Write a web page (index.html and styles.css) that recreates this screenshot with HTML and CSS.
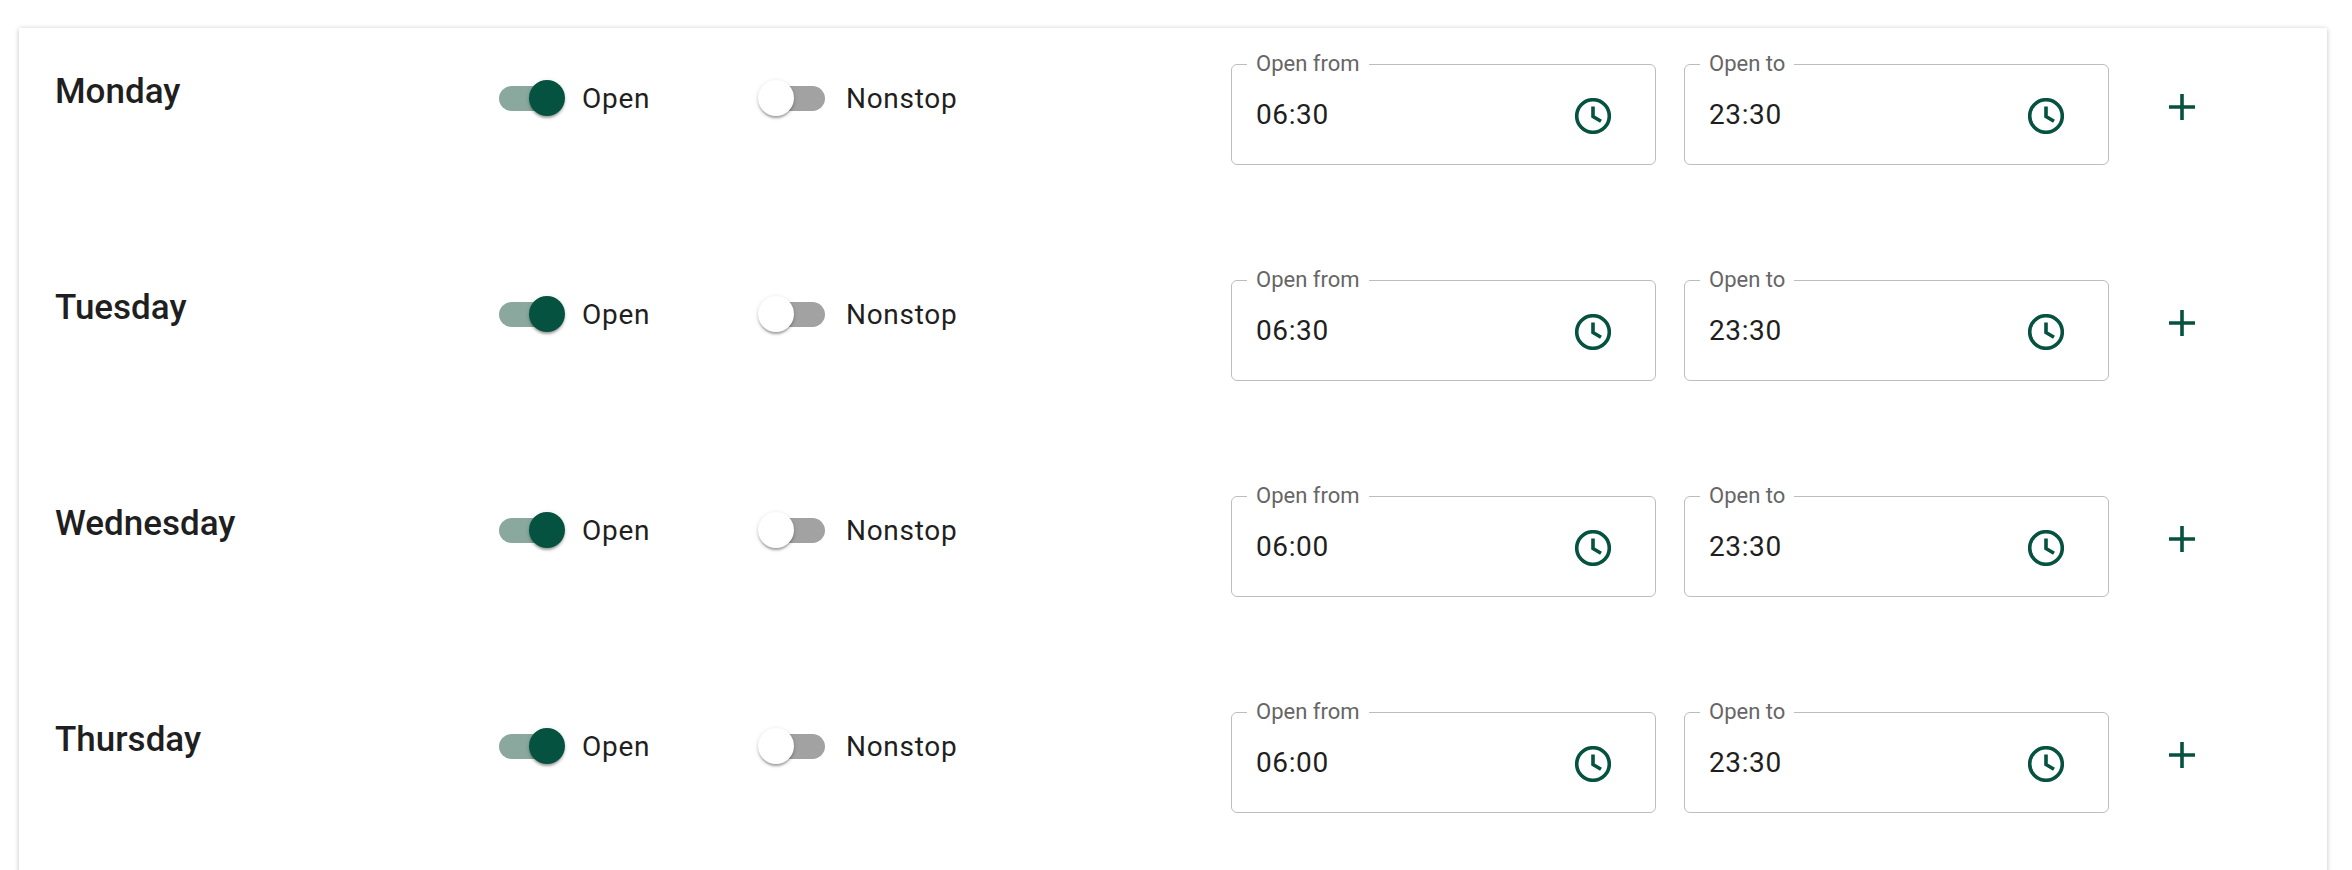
FILE: index.html
```html
<!DOCTYPE html>
<html lang="en">
<head>
<meta charset="utf-8">
<title>Opening hours</title>
<link rel="stylesheet" href="styles.css">
</head>
<body>
<main class="card">
  <section class="row">
    <h2 class="day">Monday</h2>
    <div class="switch-wrap open-col"><span class="switch on"><span class="track"></span><span class="thumb"></span></span><span class="switch-label">Open</span></div>
    <div class="switch-wrap nonstop-col"><span class="switch"><span class="track"></span><span class="thumb"></span></span><span class="switch-label">Nonstop</span></div>
    <div class="fields">
      <div class="field"><span class="legend">Open from</span><span class="value">06:30</span><svg class="clock" viewBox="0 0 36 36"><circle cx="18" cy="18" r="16.3"/><path d="M18 8.5V18.5L26 23.2"/></svg></div>
      <div class="field"><span class="legend">Open to</span><span class="value">23:30</span><svg class="clock" viewBox="0 0 36 36"><circle cx="18" cy="18" r="16.3"/><path d="M18 8.5V18.5L26 23.2"/></svg></div>
    </div>
    <svg class="plus" viewBox="0 0 26 26"><path d="M13 0V26M0 13H26"/></svg>
  </section>
  <section class="row">
    <h2 class="day">Tuesday</h2>
    <div class="switch-wrap open-col"><span class="switch on"><span class="track"></span><span class="thumb"></span></span><span class="switch-label">Open</span></div>
    <div class="switch-wrap nonstop-col"><span class="switch"><span class="track"></span><span class="thumb"></span></span><span class="switch-label">Nonstop</span></div>
    <div class="fields">
      <div class="field"><span class="legend">Open from</span><span class="value">06:30</span><svg class="clock" viewBox="0 0 36 36"><circle cx="18" cy="18" r="16.3"/><path d="M18 8.5V18.5L26 23.2"/></svg></div>
      <div class="field"><span class="legend">Open to</span><span class="value">23:30</span><svg class="clock" viewBox="0 0 36 36"><circle cx="18" cy="18" r="16.3"/><path d="M18 8.5V18.5L26 23.2"/></svg></div>
    </div>
    <svg class="plus" viewBox="0 0 26 26"><path d="M13 0V26M0 13H26"/></svg>
  </section>
  <section class="row">
    <h2 class="day">Wednesday</h2>
    <div class="switch-wrap open-col"><span class="switch on"><span class="track"></span><span class="thumb"></span></span><span class="switch-label">Open</span></div>
    <div class="switch-wrap nonstop-col"><span class="switch"><span class="track"></span><span class="thumb"></span></span><span class="switch-label">Nonstop</span></div>
    <div class="fields">
      <div class="field"><span class="legend">Open from</span><span class="value">06:00</span><svg class="clock" viewBox="0 0 36 36"><circle cx="18" cy="18" r="16.3"/><path d="M18 8.5V18.5L26 23.2"/></svg></div>
      <div class="field"><span class="legend">Open to</span><span class="value">23:30</span><svg class="clock" viewBox="0 0 36 36"><circle cx="18" cy="18" r="16.3"/><path d="M18 8.5V18.5L26 23.2"/></svg></div>
    </div>
    <svg class="plus" viewBox="0 0 26 26"><path d="M13 0V26M0 13H26"/></svg>
  </section>
  <section class="row">
    <h2 class="day">Thursday</h2>
    <div class="switch-wrap open-col"><span class="switch on"><span class="track"></span><span class="thumb"></span></span><span class="switch-label">Open</span></div>
    <div class="switch-wrap nonstop-col"><span class="switch"><span class="track"></span><span class="thumb"></span></span><span class="switch-label">Nonstop</span></div>
    <div class="fields">
      <div class="field"><span class="legend">Open from</span><span class="value">06:00</span><svg class="clock" viewBox="0 0 36 36"><circle cx="18" cy="18" r="16.3"/><path d="M18 8.5V18.5L26 23.2"/></svg></div>
      <div class="field"><span class="legend">Open to</span><span class="value">23:30</span><svg class="clock" viewBox="0 0 36 36"><circle cx="18" cy="18" r="16.3"/><path d="M18 8.5V18.5L26 23.2"/></svg></div>
    </div>
    <svg class="plus" viewBox="0 0 26 26"><path d="M13 0V26M0 13H26"/></svg>
  </section>
</main>
</body>
</html>
```
FILE: styles.css
```css
html, body {
  margin: 0;
  height: 870px;
  overflow: hidden;
  background: #fff;
}
body {
  padding: 28px 25px 0 19px;
  box-sizing: border-box;
  font-family: Roboto, "Liberation Sans", sans-serif;
  color: #1f1f1f;
}
.card {
  background: #fff;
  box-shadow: 0 1px 5px 0 rgba(0,0,0,.2), 0 0 6px 0 rgba(0,0,0,.05);
  height: 1000px;
}
.row {
  height: 216px;
  box-sizing: border-box;
  display: grid;
  grid-template-columns: 444px 259px 473px 881px 1fr;
  align-items: start;
  padding: 36px 0 0 36px;
}
.day {
  margin: 7px 0 0;
  font-size: 35px;
  line-height: 42px;
  font-weight: 500;
}
.switch-wrap {
  display: flex;
  align-items: center;
  height: 36px;
  margin-top: 16px;
}
.switch {
  position: relative;
  display: block;
  width: 66px;
  height: 36px;
  flex: none;
}
.track {
  position: absolute;
  top: 6px;
  left: 7px;
  width: 60px;
  height: 25px;
  border-radius: 13px;
  background: #a2a2a2;
}
.thumb {
  position: absolute;
  top: 0;
  left: 0;
  width: 36px;
  height: 36px;
  border-radius: 50%;
  background: #fff;
  box-shadow: 0 3px 2px -1px rgba(0,0,0,.2), 0 2px 3px 0 rgba(0,0,0,.14), 0 1px 5px 0 rgba(0,0,0,.12);
}
.on .track {
  left: 0;
  background: #8ba89e;
}
.on .thumb {
  left: 30px;
  background: #04523f;
}
.switch-label {
  font-size: 28px;
  line-height: 36px;
  letter-spacing: .7px;
  margin-top: 1px;
}
.open-col .switch-label { margin-left: 17px; }
.nonstop-col .switch-label { margin-left: 22px; }
.fields {
  display: flex;
  gap: 28px;
}
.field {
  position: relative;
  box-sizing: border-box;
  width: 425px;
  height: 101px;
  border: 1px solid #bdbdbd;
  border-radius: 6px;
  display: flex;
  align-items: center;
  justify-content: space-between;
  padding: 0 44px 0 24px;
}
.legend {
  position: absolute;
  top: -13px;
  left: 15px;
  padding: 0 9px;
  background: #fff;
  font-size: 22px;
  line-height: 24px;
  color: #666;
  white-space: nowrap;
}
.value {
  font-size: 28px;
  line-height: 36px;
  letter-spacing: .6px;
}
.clock {
  width: 36px;
  height: 36px;
  margin-top: 2px;
  fill: none;
  stroke: #04523f;
  stroke-width: 3.6;
}
.plus {
  width: 26px;
  height: 26px;
  margin-top: 30px;
  margin-left: 57px;
  fill: none;
  stroke: #04523f;
  stroke-width: 3.6;
}
```
